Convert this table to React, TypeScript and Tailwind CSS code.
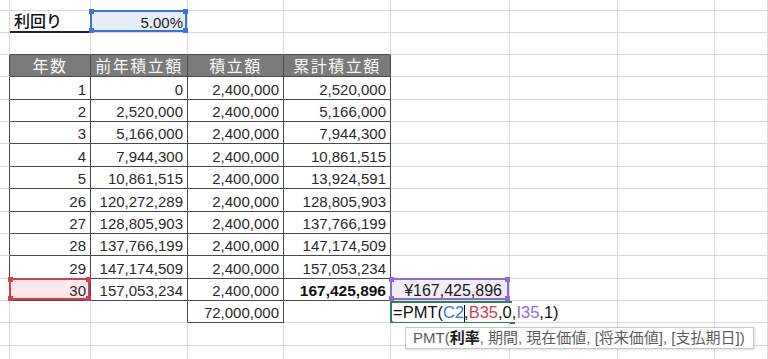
import React from "react";

type Cell = {
  t?: React.ReactNode;
  a?: "r" | "c" | "l";
  txt?: string;
  bg?: string;
  rc?: string;
  bc?: string;
  ov?: React.ReactNode;
};

const RL = "border-r-[#dadada]";
const RD = "border-r-[#4a4a4a]";
const BL = "border-b-[#dadada]";
const BD = "border-b-[#4a4a4a]";

function Handles({ color }: { color: string }) {
  return (
    <>
      <span className={`absolute -left-[3px] -top-[3px] h-[5px] w-[5px] ${color}`} />
      <span className={`absolute -right-[3px] -top-[3px] h-[5px] w-[5px] ${color}`} />
      <span className={`absolute -left-[3px] -bottom-[3px] h-[5px] w-[5px] ${color}`} />
      <span className={`absolute -right-[3px] -bottom-[3px] h-[5px] w-[5px] ${color}`} />
    </>
  );
}

const blueSel = (
  <div className="pointer-events-none absolute -left-px -top-px right-0 bottom-0 z-10 border-2 border-[#3f72d6]">
    <Handles color="bg-[#3f72d6]" />
  </div>
);
const redSel = (
  <div className="pointer-events-none absolute -left-px -top-px right-0 bottom-0 z-10 border-2 border-[#d3404c]">
    <Handles color="bg-[#d3404c]" />
  </div>
);
const purpleSel = (
  <div className="pointer-events-none absolute -left-px -top-px right-0 bottom-0 z-10 border-2 border-[#9467d4]">
    <Handles color="bg-[#9467d4]" />
  </div>
);

const editor = (
  <div className="absolute -left-px top-0 z-20 flex h-[calc(100%+1px)] w-[122px] items-center overflow-visible whitespace-nowrap border-b-2 border-l-2 border-t-2 border-[#2e8050] pl-px text-[16.5px] leading-[18px] text-[#111]">
    <span className="relative z-20 bg-white pr-1">
      =PMT(<span className="text-[#3f72d6]">C2</span>
      <span className="-mr-px inline-block h-[17px] w-px bg-black align-middle" />
      ,<span className="text-[#d3404c]">B35</span>,0,<span className="text-[#9467d4]">I35</span>,1)
    </span>
    <span className="absolute -bottom-[3px] -right-[3px] h-[5px] w-[5px] bg-[#2e8050]" />
    <div className="absolute left-[13px] top-[24px] z-30 flex h-[22px] items-center whitespace-nowrap border border-[#c6c6c6] bg-white pl-[7px] pr-[8px] text-[15px] leading-[17px] text-[#5c5c5c] shadow-[1px_1px_2px_rgba(0,0,0,0.12)]">
      PMT(<span className="font-bold text-[#1a1a1a]">利率</span>, 期間, 現在価値, [将来価値], [支払期日])
    </div>
  </div>
);

const data: [string, string, string, string][] = [
  ["1", "0", "2,400,000", "2,520,000"],
  ["2", "2,520,000", "2,400,000", "5,166,000"],
  ["3", "5,166,000", "2,400,000", "7,944,300"],
  ["4", "7,944,300", "2,400,000", "10,861,515"],
  ["5", "10,861,515", "2,400,000", "13,924,591"],
  ["26", "120,272,289", "2,400,000", "128,805,903"],
  ["27", "128,805,903", "2,400,000", "137,766,199"],
  ["28", "137,766,199", "2,400,000", "147,174,509"],
  ["29", "147,174,509", "2,400,000", "157,053,234"],
  ["30", "157,053,234", "2,400,000", "167,425,896"],
];

function buildRows(): Cell[][] {
  const rows: Cell[][] = [];
  const empty = (): Cell[] => Array.from({ length: 9 }, () => ({}));
  rows.push(empty());
  const r1 = empty();
  r1[1] = { t: "利回り", a: "l", txt: "text-[16px] font-medium text-[#111]", bc: "border-b-2 border-b-[#222]" };
  r1[2] = { t: "5.00%", a: "r", bg: "bg-[#e8eef9]", ov: blueSel, txt: "text-[15px] text-[#222]" };
  rows.push(r1);
  const r2 = empty();
  for (let c = 1; c <= 4; c++) r2[c] = { bc: BD };
  rows.push(r2);
  const r3 = empty();
  r3[0] = { rc: RD };
  ["年数", "前年積立額", "積立額", "累計積立額"].forEach((h, i) => {
    r3[i + 1] = {
      t: h,
      a: "c",
      bg: "bg-[#7a7a7a]",
      rc: RD,
      bc: BD,
      txt: "text-[16px] tracking-[1.5px] text-[#f7f7f7]",
    };
  });
  rows.push(r3);
  data.forEach((d, idx) => {
    const r = empty();
    r[0] = { rc: RD };
    const last = idx === data.length - 1;
    d.forEach((v, i) => {
      r[i + 1] = {
        t: v,
        a: "r",
        rc: RD,
        bc: BD,
        txt:
          last && i === 3
            ? "text-[15.5px] font-bold text-[#111]"
            : "text-[15px] text-[#2a2a2a]",
      };
    });
    if (last) {
      r[1] = { ...r[1], bg: "bg-[#fbe8ea]", ov: redSel };
      r[5] = {
        t: "¥167,425,896",
        a: "r",
        bg: "bg-[#f1edf9]",
        ov: purpleSel,
        txt: "text-[16px] text-[#1a1a1a] pr-[3px]",
      };
    }
    rows.push(r);
  });
  const r14 = empty();
  r14[2] = { rc: RD };
  r14[3] = { t: "72,000,000", a: "r", rc: RD, bc: BD, txt: "text-[15px] text-[#2a2a2a]" };
  r14[5] = { ov: editor, rc: "border-r-white" };
  rows.push(r14);
  rows.push(empty());
  rows.push(empty());
  return rows;
}

export default function App() {
  const rows = buildRows();
  return (
    <div className="h-[359px] w-[768px] overflow-hidden bg-white font-['Liberation_Sans','Noto_Sans_CJK_JP',sans-serif]">
      <div className="grid grid-cols-[10px_81px_97px_96px_107px_119px_108px_97px_53px] grid-rows-[11px_22px_22px_repeat(13,22.36px)_14px]">
        {rows.map((row, ri) =>
          row.map((cell, ci) => {
            const align =
              cell.a === "r" ? "justify-end pr-[4px]" : cell.a === "c" ? "justify-center" : "justify-start pl-[4px]";
            return (
              <div
                key={`${ri}-${ci}`}
                className={`relative flex items-end whitespace-nowrap border-b border-r ${align} ${cell.rc ?? RL} ${cell.bc ?? BL} ${cell.bg ?? "bg-white"}`}
              >
                {cell.t !== undefined && (
                  <span className={`relative z-0 leading-[18px] ${cell.txt ?? "text-[15px]"}`}>{cell.t}</span>
                )}
                {cell.ov}
              </div>
            );
          })
        )}
      </div>
    </div>
  );
}
